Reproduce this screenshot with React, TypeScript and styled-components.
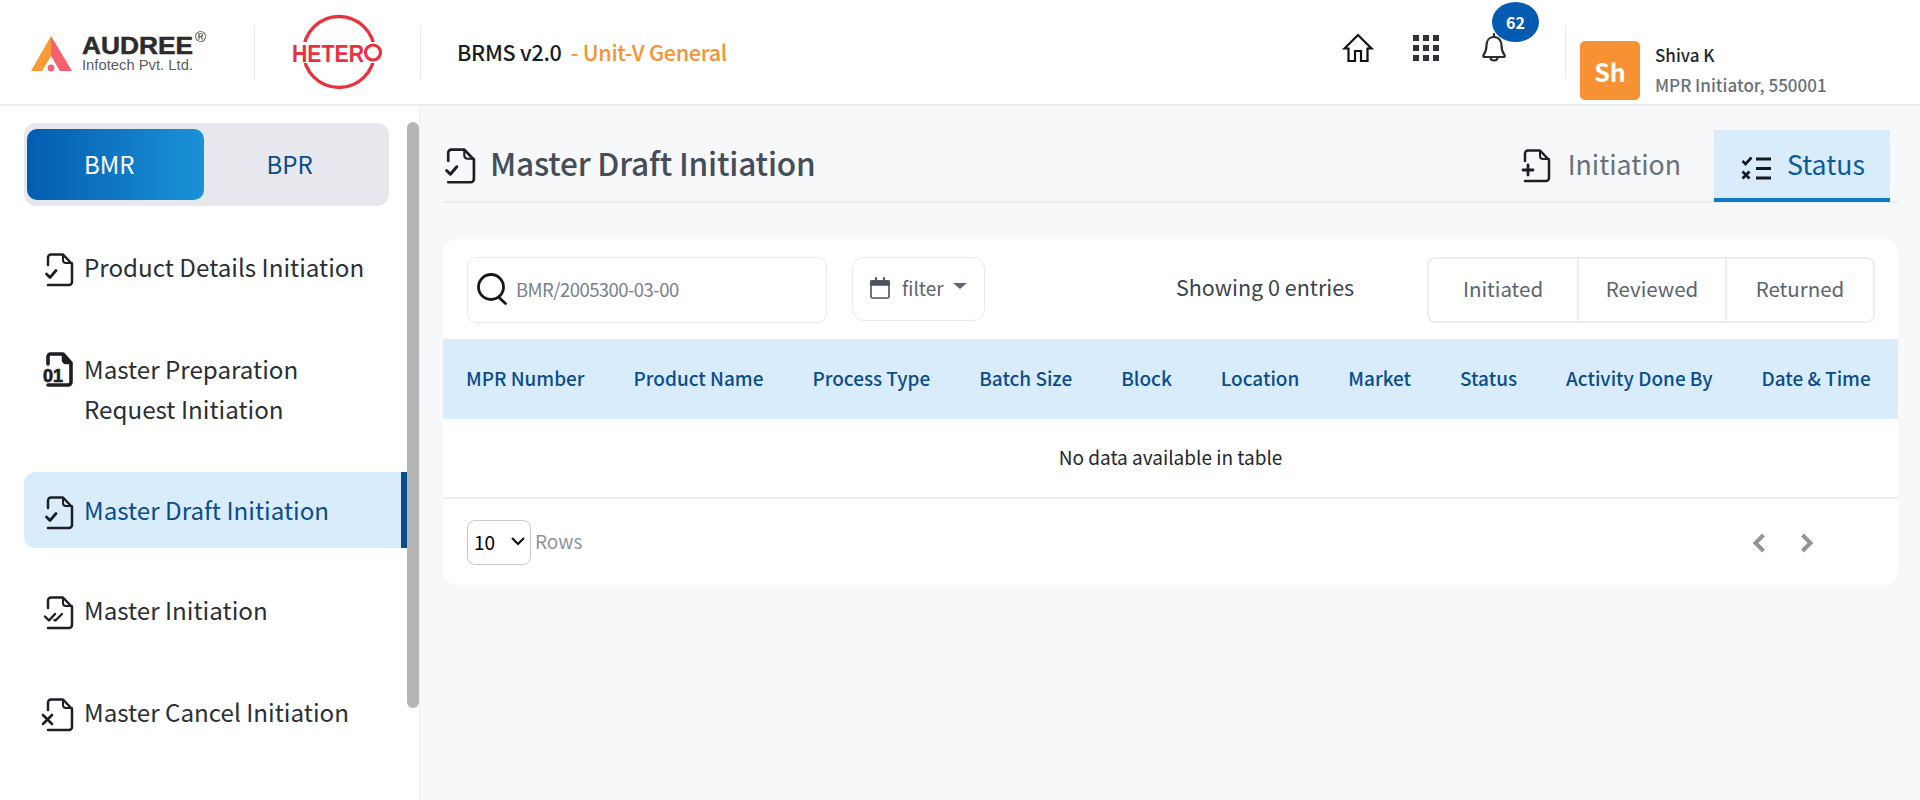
import React from "react";
import styled, { createGlobalStyle } from "styled-components";

const Global = createGlobalStyle`
  html, body { margin: 0; padding: 0; height: 800px; overflow: hidden; background: #f7f8fa; }
  body { font-family: "Noto Sans CJK JP", "Noto Sans", sans-serif; }
  * { box-sizing: border-box; }
`;

const Page = styled.div`
  width: 1920px;
  height: 800px;
  display: flex;
  flex-direction: column;
`;

const Header = styled.header`
  height: 106px;
  flex: none;
  background: #fff;
  border-bottom: 2px solid #eceef1;
  display: flex;
  align-items: center;
`;

const LogoSlot = styled.div<{ $w: number; $pl: number }>`
  width: ${(p) => p.$w}px;
  padding-left: ${(p) => p.$pl}px;
  flex: none;
  display: flex;
  align-items: center;
`;

const VRule = styled.div`
  width: 1px;
  height: 53px;
  background: #e6e8eb;
  flex: none;
`;

const AppTitle = styled.div`
  margin-left: 36px;
  padding-bottom: 2px;
  font-size: 21.6px;
  font-weight: 500;
  color: #1a1e25;
  letter-spacing: -0.3px;
  white-space: pre;
  flex: 1;
`;

const Accent = styled.span`
  color: #f79234;
`;

const IconRow = styled.div`
  display: flex;
  align-items: center;
  flex: none;
  width: 222px;
  height: 100%;
  position: relative;
`;

const IconSlot = styled.div<{ $w: number }>`
  width: ${(p) => p.$w}px;
  display: flex;
  align-items: center;
  justify-content: flex-start;
  margin-top: -9px;
`;

const Badge = styled.div`
  position: absolute;
  left: 149px;
  top: 2px;
  width: 47px;
  height: 40px;
  border-radius: 50%;
  background: #045cb2;
  color: #fff;
  font-size: 16px;
  font-weight: 700;
  display: flex;
  align-items: center;
  justify-content: center;
`;

const UserBox = styled.div`
  display: flex;
  align-items: flex-start;
  gap: 15px;
  padding-left: 14px;
  width: 354px;
  flex: none;
  height: 60px;
  margin-top: 38px;
`;

const Avatar = styled.div`
  width: 60px;
  height: 59px;
  border-radius: 5px;
  background: #f79234;
  color: #fff;
  font-size: 25px;
  font-weight: 700;
  display: flex;
  align-items: center;
  justify-content: center;
`;

const UserName = styled.div`
  font-size: 17px;
  font-weight: 500;
  color: #24282e;
  line-height: 24px;
  margin-top: 2px;
`;

const UserRole = styled.div`
  font-size: 17px;
  font-weight: 500;
  color: #6a7078;
  line-height: 24px;
  margin-top: 6px;
`;

const Body = styled.div`
  flex: 1;
  display: flex;
  min-height: 0;
`;

const Sidebar = styled.aside`
  width: 420px;
  flex: none;
  background: #fff;
  border-right: 1px solid #eceef1;
  padding: 17px 0 0 24px;
  position: relative;
`;

const ScrollThumb = styled.div`
  position: absolute;
  left: 407px;
  top: 16px;
  width: 12px;
  height: 586px;
  border-radius: 6px;
  background: #b4b5b5;
`;

const Toggle = styled.div`
  width: 365px;
  height: 83px;
  background: #e6e8ed;
  border-radius: 12px;
  padding: 6px 3px;
  display: flex;
`;

const ToggleBtn = styled.div<{ $active?: boolean }>`
  width: ${(p) => (p.$active ? "177px" : "183px")};
  height: 71px;
  border-radius: 10px;
  display: flex;
  align-items: center;
  font-size: 24px;
  padding-bottom: 2px;
  padding-left: ${(p) => (p.$active ? "57px" : "63px")};
  color: ${(p) => (p.$active ? "#fff" : "#0a4c8c")};
  background: ${(p) => (p.$active ? "linear-gradient(90deg, #045cb0, #1a92d8)" : "transparent")};
`;

const Menu = styled.nav`
  width: 383px;
  margin-top: 23px;
  display: flex;
  flex-direction: column;
`;

const MenuItem = styled.div<{ $active?: boolean; $h: number; $mb: number }>`
  height: ${(p) => p.$h}px;
  margin-bottom: ${(p) => p.$mb}px;
  padding-left: 21px;
  display: flex;
  align-items: flex-start;
  gap: 11px;
  font-size: 24.2px;
  line-height: 40px;
  padding-top: 18px;
  color: ${(p) => (p.$active ? "#0a4c8c" : "#2b2f36")};
  background: ${(p) => (p.$active ? "#d9ecfb" : "transparent")};
  border-radius: 12px 0 0 12px;
  border-right: ${(p) => (p.$active ? "6px solid #0a4c8c" : "none")};
`;

const MenuIcon = styled.span`
  width: 28px;
  flex: none;
  display: block;
  margin-top: 6px;
  line-height: 0;
`;

const Main = styled.main`
  flex: 1;
  min-width: 0;
  padding: 0 22px 0 23px;
`;

const TitleBar = styled.div`
  margin-top: 25px;
  height: 72px;
  border-bottom: 2px solid #eaecef;
  display: flex;
  align-items: center;
  justify-content: space-between;
  padding-right: 8px;
`;

const TitleLeft = styled.div`
  display: flex;
  align-items: center;
  gap: 15px;
  padding-left: 2px;
`;

const PageTitle = styled.h1`
  margin: 0;
  padding-bottom: 8px;
  font-size: 31.6px;
  font-weight: 500;
  color: #454d59;
  letter-spacing: -0.2px;
`;

const Tabs = styled.div`
  display: flex;
  align-items: stretch;
  height: 72px;
`;

const Tab = styled.div<{ $active?: boolean }>`
  display: flex;
  align-items: center;
  gap: ${(p) => (p.$active ? "16px" : "18px")};
  font-size: 26.7px;
  padding: ${(p) => (p.$active ? "0 25px 0 27px" : "0 33px 0 0")};
  color: ${(p) => (p.$active ? "#0a5a9c" : "#68707c")};
  background: ${(p) => (p.$active ? "#d9ecfb" : "transparent")};
  border-bottom: ${(p) => (p.$active ? "4px solid #0f78c8" : "none")};
`;

const TabLabel = styled.span<{ $active?: boolean }>`
  padding-bottom: ${(p) => (p.$active ? "2px" : "5px")};
`;

const StatusGlyph = styled.span`
  display: block;
  margin-top: 8px;
`;

const Card = styled.section`
  margin-top: 36px;
  height: 346px;
  background: #fff;
  border-radius: 14px;
  overflow: hidden;
`;

const Toolbar = styled.div`
  height: 100px;
  padding: 18px 23px 0 24px;
  display: flex;
  align-items: flex-start;
`;

const Search = styled.div`
  width: 360px;
  height: 66px;
  border: 1px solid #e8eaee;
  border-radius: 10px;
  display: flex;
  align-items: center;
  padding: 0 0 3px 9px;
  gap: 8px;
  font-size: 18.5px;
  letter-spacing: -0.55px;
  color: #79808b;
`;

const FilterBtn = styled.div`
  margin-left: 25px;
  width: 133px;
  height: 64px;
  border: 1px solid #e8eaee;
  border-radius: 12px;
  display: flex;
  align-items: center;
  padding: 0 0 3px 17px;
  gap: 12px;
  font-size: 19px;
  color: #5c6470;
`;

const Caret = styled.span`
  width: 0;
  height: 0;
  margin-left: -3px;
  margin-top: -3px;
  border-left: 7px solid transparent;
  border-right: 7px solid transparent;
  border-top: 6px solid #5c6470;
`;

const Showing = styled.div`
  flex: 1;
  padding-left: 191px;
  font-size: 21.5px;
  color: #3c424b;
  line-height: 59px;
`;

const Segments = styled.div`
  width: 448px;
  height: 66px;
  flex: none;
  border: 2px solid #eceef1;
  border-radius: 8px;
  display: flex;
`;

const Segment = styled.div<{ $w: number }>`
  width: ${(p) => p.$w}px;
  display: flex;
  align-items: center;
  justify-content: center;
  padding-bottom: 5px;
  font-size: 20.5px;
  color: #5c6470;
  border-left: 2px solid #eceef1;
  &:first-child { border-left: 0; }
`;

const Table = styled.table`
  width: 100%;
  border-collapse: collapse;
`;

const Th = styled.th<{ $pl?: number }>`
  height: 80px;
  background: #d9ecfb;
  color: #0a4c8c;
  font-size: 18.95px;
  font-weight: 500;
  text-align: left;
  white-space: nowrap;
  padding: 0 0 3px ${(p) => p.$pl ?? 0}px;
  &:last-child { width: 100%; }
`;

const Td = styled.td`
  height: 79px;
  text-align: center;
  font-size: 19px;
  color: #23272d;
  padding-bottom: 4px;
  border-bottom: 2px solid #eceef1;
`;

const Footer = styled.div`
  display: flex;
  align-items: center;
  padding: 21px 0 0 24px;
`;

const SelectWrap = styled.div`
  position: relative;
  width: 64px;
  height: 45px;
`;

const RowsSelect = styled.select`
  appearance: none;
  width: 64px;
  height: 45px;
  border: 1px solid #c8c8c8;
  border-radius: 8px;
  background: #fff;
  font-family: inherit;
  font-size: 19px;
  color: #000;
  padding: 0 0 2px 6px;
`;

const SelectChevron = styled.svg`
  position: absolute;
  left: 44px;
  top: 17px;
  pointer-events: none;
`;

const RowsLabel = styled.span`
  margin-left: 4px;
  padding-bottom: 4px;
  font-size: 19px;
  color: #8d949e;
`;

const Pager = styled.div`
  margin-left: auto;
  margin-right: 84px;
  display: flex;
  gap: 34px;
`;

const IconSvg = styled.svg`
  display: block;
  overflow: visible;
  flex: none;
`;

type DocKind = "check" | "double" | "cancel" | "plus" | "bin";

const DocIcon = ({ kind, size = 28 }: { kind: DocKind; size?: number }) => (
  <IconSvg
    width={size}
    height={(size * 34) / 28}
    viewBox={kind === "bin" ? "0 3 28 34" : "0 0 28 34"}
    fill="none"
    stroke="#1c1f23"
    strokeWidth="2.5"
    strokeLinecap="round"
    strokeLinejoin="round"
  >
    {kind === "bin" ? (
      <>
        <path d="M3 12V4.500A2.500 2.500 0 0 1 5.500 2H18l8 9v19a3 3 0 0 1-3 3H3" strokeWidth="3.6" />
        <path d="M18 3v5a3 3 0 0 0 3 3h5z" fill="#1c1f23" />
        <text x="-2" y="30" fontFamily="Liberation Sans, sans-serif" fontWeight="700" fontSize="18" fill="#1c1f23" stroke="#1c1f23" strokeWidth="0.7">01</text>
      </>
    ) : (
      <>
        <path d="M3 12V4.500A3 3 0 0 1 6 1.500h12l9 9.500V29a3 3 0 0 1-3 3H3" />
        <path d="M18 2v5a3 3 0 0 0 3 3h6" strokeWidth="2" />
        {kind === "check" && <path d="M1.500 21l3.500 3.500L11 17.500" strokeWidth="2.8" />}
        {kind === "double" && (
          <>
            <path d="M0 20.500l4 4 6-6.500" strokeWidth="2.4" />
            <path d="M9.500 24l1 .5 6.500-6.500" strokeWidth="2.4" />
          </>
        )}
        {kind === "plus" && <path d="M6 16v10M1 21h10" strokeWidth="2.8" />}
        {kind === "cancel" && <path d="M-2 17l9 9M7 17l-9 9" strokeWidth="2.6" />}
      </>
    )}
  </IconSvg>
);

const Audree = () => (
  <IconSvg width="180" height="50" viewBox="0 0 180 50">
    <polygon points="21,9 1,44 12,44 21,29" fill="#f99a37" />
    <polygon points="21,9 42,44 30,44 21,29" fill="#f75f72" />
    <circle cx="21" cy="41" r="3.400" fill="#f75f72" />
    <text x="52" y="27" fontFamily="Liberation Sans, sans-serif" fontWeight="700" fontSize="24" fill="#2c2c2e" stroke="#2c2c2e" strokeWidth="0.5" textLength="111" lengthAdjust="spacingAndGlyphs">AUDREE</text>
    <text x="52" y="43" fontFamily="Liberation Sans, sans-serif" fontSize="14" fill="#5b5d60" textLength="111" lengthAdjust="spacingAndGlyphs">Infotech Pvt. Ltd.</text>
    <text x="165" y="15" fontFamily="Liberation Sans, sans-serif" fontSize="15" fill="#2c2c2e">®</text>
  </IconSvg>
);

const Hetero = () => (
  <IconSvg width="96" height="78" viewBox="0 0 96 78">
    <circle cx="49" cy="39" r="35.500" fill="none" stroke="#e8323f" strokeWidth="3.400" />
    <rect x="0" y="29" width="92" height="21" fill="#fff" />
    <text x="2" y="48.500" fontFamily="Liberation Sans, sans-serif" fontWeight="700" fontSize="23" fill="#e8323f" textLength="72" lengthAdjust="spacingAndGlyphs">HETER</text>
    <circle cx="83" cy="39.500" r="7.500" fill="#fff" stroke="#e8323f" strokeWidth="3.200" />
  </IconSvg>
);

const HomeIcon = () => (
  <IconSvg width="30" height="30" viewBox="0 0 30 30" fill="none" stroke="#111" strokeWidth="2.200" strokeLinejoin="miter" strokeLinecap="round">
    <path d="M1.500 15.500L15 2l13.500 13.500h-4V28H18V18h-6v10H5.500V15.500z" />
  </IconSvg>
);

const GridIcon = () => (
  <IconSvg width="26" height="26" viewBox="0 0 26 26" fill="#2f3237">
    {[0, 10, 20].flatMap((y) =>
      [0, 10, 20].map((x) => <rect key={`${x}-${y}`} x={x} y={y} width="6" height="6" />)
    )}
  </IconSvg>
);

const BellIcon = () => (
  <IconSvg width="26" height="30" viewBox="0 0 26 30" fill="none" stroke="#2a2d32" strokeWidth="2.200" strokeLinejoin="round" strokeLinecap="round">
    <path d="M13 4c-5 0-7.500 4-7.500 8.500 0 5-1 7-3 9.500-.7 1 0 2 1 2h19c1 0 1.700-1 1-2-2-2.500-3-4.500-3-9.500C20.500 8 18 4 13 4z" />
    <path d="M13 1v3M9.500 24.500c0 4 7 4 7 0" />
  </IconSvg>
);

const SearchIcon = () => (
  <IconSvg width="31" height="32" viewBox="0 0 31 32" fill="none" stroke="#15181c" strokeWidth="2.800" strokeLinecap="round">
    <circle cx="14" cy="14" r="12.500" />
    <path d="M22 24.500l6.500 6" />
  </IconSvg>
);

const CalIcon = () => (
  <IconSvg width="20" height="22" viewBox="0 0 20 22" fill="none" stroke="#4b5360" strokeWidth="1.600">
    <rect x="1" y="4" width="18" height="17" rx="1.500" />
    <path d="M1 4h18v4H1z" fill="#4b5360" />
    <path d="M6 1v4M14 1v4" strokeWidth="2" strokeLinecap="round" />
  </IconSvg>
);

const StatusIcon = () => (
  <IconSvg width="30" height="24" viewBox="0 0 30 24" fill="none" stroke="#16191d" strokeWidth="3">
    <path d="M1.500 5l3 3 6-6.500" strokeWidth="2.600" />
    <path d="M1.500 15.500l7 7M8.500 15.500l-7 7" strokeWidth="2.800" />
    <path d="M15 3h15M15 12.500h15M15 22h15" />
  </IconSvg>
);

const Chevron = ({ dir }: { dir: "l" | "r" }) => (
  <IconSvg width="14" height="20" viewBox="0 0 14 20" fill="none" stroke="#949494" strokeWidth="4">
    <path d={dir === "l" ? "M11.500 2L3.500 10l8 8" : "M2.500 2l8 8-8 8"} />
  </IconSvg>
);

const columns: [string, number][] = [
  ["MPR Number", 23],
  ["Product Name", 49],
  ["Process Type", 49],
  ["Batch Size", 49],
  ["Block", 49],
  ["Location", 49],
  ["Market", 49],
  ["Status", 49],
  ["Activity Done By", 49],
  ["Date & Time", 49],
];

export default function App() {
  return (
    <Page>
      <Global />
      <Header>
        <LogoSlot $w={254} $pl={30}>
          <Audree />
        </LogoSlot>
        <VRule />
        <LogoSlot $w={165} $pl={35}>
          <Hetero />
        </LogoSlot>
        <VRule />
        <AppTitle>
          BRMS v2.0 <Accent> - Unit-V General</Accent>
        </AppTitle>
        <IconRow>
          <IconSlot $w={70}>
            <HomeIcon />
          </IconSlot>
          <IconSlot $w={68}>
            <GridIcon />
          </IconSlot>
          <IconSlot $w={60}>
            <BellIcon />
          </IconSlot>
          <Badge>62</Badge>
        </IconRow>
        <VRule />
        <UserBox>
          <Avatar>Sh</Avatar>
          <div>
            <UserName>Shiva K</UserName>
            <UserRole>MPR Initiator, 550001</UserRole>
          </div>
        </UserBox>
      </Header>
      <Body>
        <Sidebar>
          <ScrollThumb />
          <Toggle>
            <ToggleBtn $active>BMR</ToggleBtn>
            <ToggleBtn>BPR</ToggleBtn>
          </Toggle>
          <Menu>
            <MenuItem $h={76} $mb={26}><MenuIcon><DocIcon kind="check" /></MenuIcon>Product Details Initiation</MenuItem>
            <MenuItem $h={116} $mb={25}><MenuIcon><DocIcon kind="bin" /></MenuIcon><span>Master Preparation<br />Request Initiation</span></MenuItem>
            <MenuItem $h={76} $mb={24} $active><MenuIcon><DocIcon kind="check" /></MenuIcon>Master Draft Initiation</MenuItem>
            <MenuItem $h={76} $mb={26}><MenuIcon><DocIcon kind="double" /></MenuIcon>Master Initiation</MenuItem>
            <MenuItem $h={76} $mb={26}><MenuIcon><DocIcon kind="cancel" /></MenuIcon>Master Cancel Initiation</MenuItem>
          </Menu>
        </Sidebar>
        <Main>
          <TitleBar>
            <TitleLeft>
              <DocIcon kind="check" size={30} />
              <PageTitle>Master Draft Initiation</PageTitle>
            </TitleLeft>
            <Tabs>
              <Tab><DocIcon kind="plus" /><TabLabel>Initiation</TabLabel></Tab>
              <Tab $active><StatusGlyph><StatusIcon /></StatusGlyph><TabLabel $active>Status</TabLabel></Tab>
            </Tabs>
          </TitleBar>
          <Card>
            <Toolbar>
              <Search><SearchIcon />BMR/2005300-03-00</Search>
              <FilterBtn><CalIcon />filter<Caret /></FilterBtn>
              <Showing>Showing 0 entries</Showing>
              <Segments>
                <Segment $w={148}>Initiated</Segment>
                <Segment $w={148}>Reviewed</Segment>
                <Segment $w={148}>Returned</Segment>
              </Segments>
            </Toolbar>
            <Table>
              <thead>
                <tr>
                  {columns.map(([c, p]) => (
                    <Th key={c} $pl={p}>{c}</Th>
                  ))}
                </tr>
              </thead>
              <tbody>
                <tr>
                  <Td colSpan={10}>No data available in table</Td>
                </tr>
              </tbody>
            </Table>
            <Footer>
              <SelectWrap>
                <RowsSelect defaultValue="10">
                  <option value="10">10</option>
                </RowsSelect>
                <SelectChevron width="14" height="9" viewBox="0 0 14 9" fill="none" stroke="#111" strokeWidth="2.200">
                  <path d="M1 1l6 6 6-6" />
                </SelectChevron>
              </SelectWrap>
              <RowsLabel>Rows</RowsLabel>
              <Pager>
                <Chevron dir="l" />
                <Chevron dir="r" />
              </Pager>
            </Footer>
          </Card>
        </Main>
      </Body>
    </Page>
  );
}
